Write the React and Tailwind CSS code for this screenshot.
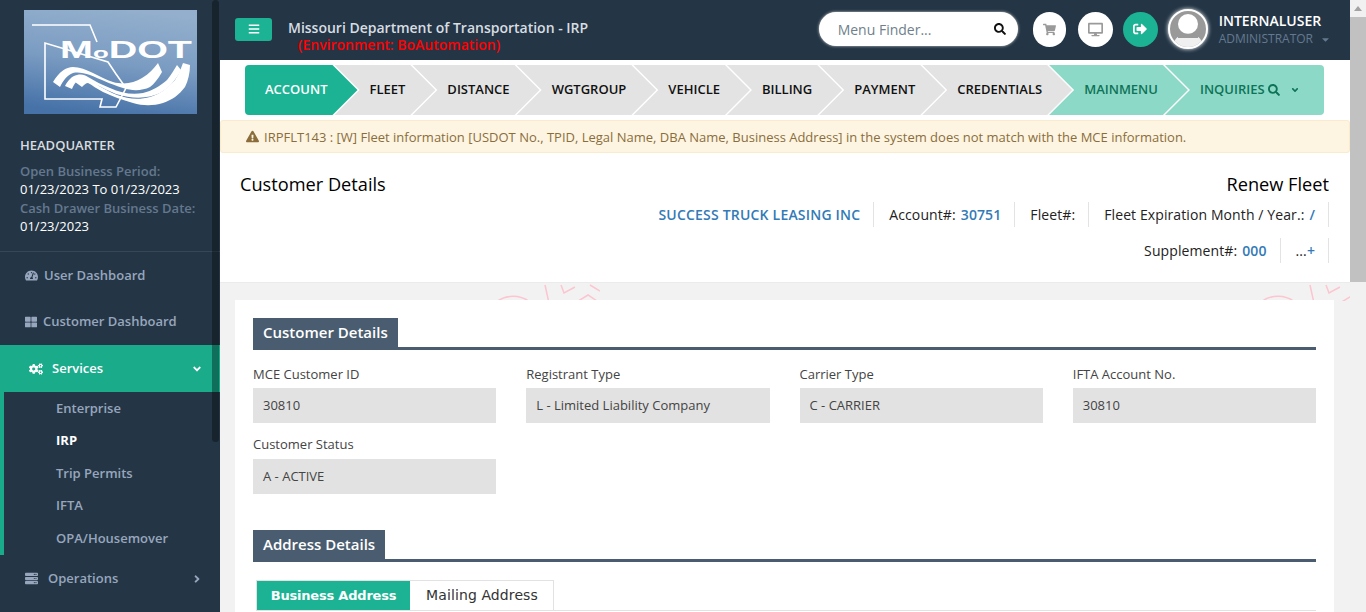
import React from "react";
import {
  FaAngleDown,
  FaAngleRight,
  FaBars,
  FaCaretDown,
  FaCogs,
  FaDesktop,
  FaExclamationTriangle,
  FaSearch,
  FaServer,
  FaShoppingCart,
  FaSignOutAlt,
  FaTachometerAlt,
  FaThLarge,
} from "react-icons/fa";

const steps = ["FLEET", "DISTANCE", "WGTGROUP", "VEHICLE", "BILLING", "PAYMENT", "CREDENTIALS"];
const subMenu = ["Enterprise", "IRP", "Trip Permits", "IFTA", "OPA/Housemover"];

const Logo = () => (
  <svg viewBox="0 0 173 104" className="block w-[173px] h-[104px] shrink-0">
    <defs>
      <linearGradient id="logoBg" x1="0.6" y1="0" x2="0.4" y2="1">
        <stop offset="0" stopColor="#93afcd" />
        <stop offset="0.5" stopColor="#7b9cc2" />
        <stop offset="1" stopColor="#4672a8" />
      </linearGradient>
    </defs>
    <rect width="173" height="104" fill="url(#logoBg)" />
    <path
      d="M8 15 L66 15 L73 32 M84 52 L92 64 L102 78 L92 97 L76 97 L78 89 L21 89 L21 33 Z"
      fill="none"
      stroke="#fff"
      strokeWidth="1.6"
    />
    <text
      x="36"
      y="48"
      fill="#fff"
      fontFamily="Liberation Sans, sans-serif"
      fontSize="23"
      textLength="132"
      lengthAdjust="spacingAndGlyphs"
    >
      M<tspan fontSize="15">o</tspan>DOT
    </text>
    <path d="M29 72 C35 62 42 57 49 57 C62 57 76 68 89 72 C100 75 110 73 118 68 C125 64 130 58 134 53 L138 62 C134 69 130 74 126 77 C118 81 108 81 99 78 C86 74 76 69 66 65 C60 63 54 62 49 63 C43 65 39 71 36 77 Z" fill="#fff" />
    <path d="M41 76 C44 70 48 66 53 65 C58 64 61 65 64 67 C71 71 78 75 86 78 C97 83 108 85 119 83 C128 81 136 76 143 70 C147 65 150 60 153 55 L157 60 C152 70 145 78 136 83 C124 89 108 89 92 84 C80 79 70 73 62 70 C56 68 52 70 48 79 Z" fill="#fff" />
    <path d="M51 72 C54 69 57 68 61 68 C70 72 80 80 93 85 C104 89 115 90 126 87 C136 84 144 78 151 70 C155 64 157 58 159 53 L166 55 C166 63 164 71 161 77 C155 85 148 90 139 93 C129 96 119 96 109 93 C98 90 88 86 79 82 C73 79 68 75 64 73 C62 73 60 75 58 77 Z" fill="#fff" />
  </svg>
);

const Sidebar = () => (
  <aside className="relative w-[220px] shrink-0 h-full bg-[#243646] overflow-hidden font-semibold text-[13px]">
    <div className="absolute right-[1px] top-0 w-[7px] h-[442px] rounded-[4px] bg-black/35" />
    <div className="pt-[10px] pl-[24px]">
      <Logo />
    </div>
    <div className="pl-[20px] pt-[22px] h-[138px] border-b border-[#364757]">
      <div className="text-[#d9dcdf] leading-[18px]">HEADQUARTER</div>
      <div className="mt-[8px] text-[#64788e] leading-[18px]">Open Business Period:</div>
      <div className="text-white font-normal text-[13px] leading-[18px]">01/23/2023 To 01/23/2023</div>
      <div className="mt-[1px] text-[#64788e] leading-[18px]">Cash Drawer Business Date:</div>
      <div className="text-white font-normal text-[13px] leading-[18px]">01/23/2023</div>
    </div>
    <div className="h-[47px] pl-[25px] flex items-center gap-[6px] text-[#98a6bd]">
      <FaTachometerAlt size={13} />
      <span>User Dashboard</span>
    </div>
    <div className="h-[46px] pl-[25px] flex items-center gap-[6px] text-[#98a6bd]">
      <FaThLarge size={12} />
      <span>Customer Dashboard</span>
    </div>
    <div className="h-[47px] pl-[29px] pr-[17px] flex items-center gap-[9px] bg-[#1aab8b] text-white">
      <FaCogs size={14} />
      <span className="flex-1">Services</span>
      <FaAngleDown size={12} />
    </div>
    <div className="h-[163px] border-l-4 border-[#1aab8b] pl-[52px]">
      {subMenu.map((item) => (
        <div
          key={item}
          className={`h-[32.5px] flex items-center ${item === "IRP" ? "text-white font-bold" : "text-[#98a6bd]"}`}
        >
          {item}
        </div>
      ))}
    </div>
    <div className="h-[47px] pl-[25px] pr-[17px] flex items-center gap-[10px] text-[#98a6bd]">
      <FaServer size={13} />
      <span className="flex-1">Operations</span>
      <FaAngleRight size={12} />
    </div>
  </aside>
);

const Header = () => (
  <header className="h-[60px] shrink-0 bg-[#243646] flex items-center pl-[15px] pr-[19px] pb-[2px]">
    <button className="w-[37px] h-[23px] rounded-[3px] bg-[#1cb394] text-white flex items-center justify-center">
      <FaBars size={12} />
    </button>
    <div className="ml-[16px] flex-1 font-semibold text-[14px] leading-[17px] pt-[13px]">
      <div className="text-[#d8dde2]">Missouri Department of Transportation - IRP</div>
      <div className="ml-[10px] text-[#ff0000]">(Environment: BoAutomation)</div>
    </div>
    <div className="w-[199px] h-[34px] rounded-full bg-white shadow-[0_0_3px_#ccc] flex items-center pl-[19px] pr-[12px] text-[14px] text-[#6f7f8c]">
      <span className="flex-1">Menu Finder...</span>
      <FaSearch size={12} className="text-[#111]" />
    </div>
    <div className="ml-[15px] w-[33px] h-[35px] rounded-full bg-white flex items-center justify-center text-[#9a9a9a]">
      <FaShoppingCart size={13} />
    </div>
    <div className="ml-[12px] w-[35px] h-[35px] rounded-full bg-white flex items-center justify-center text-[#9a9a9a]">
      <FaDesktop size={15} />
    </div>
    <div className="ml-[10px] w-[35px] h-[35px] rounded-full bg-[#1cb394] flex items-center justify-center text-white">
      <FaSignOutAlt size={14} />
    </div>
    <div className="ml-[10px] w-[40px] h-[40px] rounded-full border-2 border-white shadow-[0_0_4px_#fff] bg-[#999] overflow-hidden">
      <svg viewBox="0 0 36 36" className="w-full h-full block">
        <circle cx="18" cy="13" r="10" fill="#fff" />
        <path d="M3 36 C4 26 10 24 14 24 L22 24 C26 24 32 26 33 36 Z" fill="#fff" opacity="0.85" />
        <path d="M8 25 C12 22 24 22 28 25 L28 27 L8 27 Z" fill="#999" />
      </svg>
    </div>
    <div className="ml-[11px]">
      <div className="text-white font-semibold text-[14px] leading-[19px]">INTERNALUSER</div>
      <div className="mt-[1px] flex items-center text-[12px] leading-[16px] text-[#64798f]">
        ADMINISTRATOR
        <FaCaretDown size={11} className="ml-[7px]" />
      </div>
    </div>
  </header>
);

const chevron =
  "[clip-path:polygon(0_0,calc(100%-25px)_0,100%_50%,calc(100%-25px)_100%,0_100%,25px_50%)]";

const Stepper = () => (
  <div className="h-[50px] mt-[5px] ml-[25px] mr-[26px] flex rounded-[4px] overflow-hidden font-semibold text-[13px]">
    <div className="h-full pl-[20px] pr-[30px] flex items-center bg-[#1cb394] text-white [clip-path:polygon(0_0,calc(100%-25px)_0,100%_50%,calc(100%-25px)_100%,0_100%)]">
      ACCOUNT
    </div>
    {steps.map((step) => (
      <div key={step} className={`h-full -ml-[23px] pl-[35px] pr-[30px] flex items-center bg-[#e3e3e3] text-[#111] ${chevron}`}>
        {step}
      </div>
    ))}
    <div className={`h-full -ml-[23px] pl-[35px] pr-[30px] flex items-center bg-[#8cd9c7] text-[#0f7357] ${chevron}`}>
      MAINMENU
    </div>
    <div className="h-full flex-1 -ml-[23px] pl-[35px] flex items-center bg-[#8cd9c7] text-[#0f7357] [clip-path:polygon(0_0,100%_0,100%_100%,0_100%,25px_50%)]">
      INQUIRIES
      <FaSearch size={12} className="ml-[3px]" />
      <FaAngleDown size={10} className="ml-[10px]" />
    </div>
  </div>
);

const Alert = () => (
  <div className="mt-[5px] h-[33px] shrink-0 rounded-[3px] border border-[#faebcc] bg-[#fdf5e2] flex items-center pl-[25px] pt-[2px] text-[13px] text-[#8a6d3b]">
    <FaExclamationTriangle size={13} className="mr-[5px] -mt-[2px]" />
    IRPFLT143 : [W] Fleet information [USDOT No., TPID, Legal Name, DBA Name, Business Address] in the system does not match with the MCE information.
  </div>
);

const MetaItem = ({ children, className = "" }) => (
  <div className={`h-[25px] flex items-center border-r border-[#e3e3e3] pl-[15px] pr-[13px] tracking-[0.1px] ${className}`}>{children}</div>
);

const CustomerHeader = () => (
  <section className="h-[129px] shrink-0 bg-white pl-[20px] pr-[21px] pt-[20px] text-[14px] text-[#222]">
    <div className="flex justify-between text-[18.2px] font-medium leading-[22px] text-black">
      <span>Customer Details</span>
      <span>Renew Fleet</span>
    </div>
    <div className="mt-[7px] flex justify-end">
      <MetaItem className="font-semibold text-[#337ab7] tracking-[0.2px]">SUCCESS TRUCK LEASING INC</MetaItem>
      <MetaItem>
        Account#:<span className="ml-[5px] font-semibold text-[#337ab7]">30751</span>
      </MetaItem>
      <MetaItem>Fleet#:</MetaItem>
      <MetaItem>
        Fleet Expiration Month / Year.:<span className="ml-[5px] font-semibold text-[#337ab7]">/</span>
      </MetaItem>
    </div>
    <div className="mt-[11px] flex justify-end">
      <MetaItem>
        Supplement#:<span className="ml-[5px] font-semibold text-[#337ab7]">000</span>
      </MetaItem>
      <MetaItem>
        ...<span className="font-semibold text-[#337ab7]">+</span>
      </MetaItem>
    </div>
  </section>
);

const SectionTitle = ({ children }) => (
  <div className="border-b-[3px] border-[#4a5d70] flex">
    <div className="h-[29px] px-[10px] bg-[#4a5d70] text-white font-semibold text-[15px] flex items-center">{children}</div>
  </div>
);

const Field = ({ label, value, inputGap = "mt-[5px]" }) => (
  <div>
    <div className="h-[18px] text-[13px] leading-[18px] text-[#444]">{label}</div>
    <div className={`${inputGap} h-[35px] bg-[#e2e2e2] px-[10px] pt-[1px] flex items-center text-[13px] text-[#444]`}>{value}</div>
  </div>
);

const Gears = ({ className }) => (
  <svg viewBox="0 0 105 18" className={`absolute top-0 w-[105px] h-[18px] ${className}`} fill="none" stroke="#fcc5cf" strokeWidth="1.5">
    <path d="M0 20 C10 11 26 11 36 20" />
    <path d="M50 2 L54 20" />
    <path d="M66 2 L69 10 L80 4" />
    <path d="M80 20 L93 12 L105 20" />
    <path d="M95 2 L105 8" />
  </svg>
);

export default function App() {
  return (
    <div className="flex h-[612px] w-[1366px] overflow-hidden bg-white font-['Open_Sans',sans-serif]">
      <Sidebar />
      <main className="flex-1 min-w-0 flex flex-col">
        <Header />
        <Stepper />
        <Alert />
        <CustomerHeader />
        <div className="relative flex-1 min-h-0 bg-[#f2f2f2] border-t border-[#ebebeb] pt-[17px] pl-[15px] pr-[16px] overflow-hidden">
          <Gears className="left-[275px]" />
          <Gears className="left-[1040px]" />
          <div className="relative h-[400px] bg-white pt-[18px] px-[18px]">
            <SectionTitle>Customer Details</SectionTitle>
            <div className="mt-[15px] grid grid-cols-4 gap-x-[30px] gap-y-[12px]">
              <Field label="MCE Customer ID" value="30810" />
              <Field label="Registrant Type" value="L - Limited Liability Company" />
              <Field label="Carrier Type" value="C - CARRIER" />
              <Field label="IFTA Account No." value="30810" />
              <Field label="Customer Status" value="A - ACTIVE" inputGap="mt-[6px]" />
            </div>
            <div className="mt-[36px]">
              <SectionTitle>Address Details</SectionTitle>
            </div>
            <div className="mt-[18px] ml-[3px] flex border-b border-[#e2e2e2] font-['DejaVu_Sans',sans-serif]">
              <div className="h-[30px] w-[155px] border-t border-l border-[#e2e2e2]">
                <div className="h-full w-[153px] bg-[#1cb394] text-white font-bold flex items-center justify-center text-[13px] tracking-[-0.2px]">
                  Business Address
                </div>
              </div>
              <div className="h-[30px] w-[143px] border-t border-r border-[#e2e2e2] flex items-center justify-center text-[14px] tracking-[0.1px] text-[#333]">
                Mailing Address
              </div>
            </div>
          </div>
        </div>
      </main>
      <div className="w-[16px] shrink-0 h-full bg-[#f1f1f1] flex flex-col items-center">
        <div className="h-[17px] flex items-center">
          <div className="w-0 h-0 border-x-[4px] border-x-transparent border-b-[5px] border-b-[#a3a3a3]" />
        </div>
        <div className="w-full h-[265px] bg-[#c1c1c1]" />
      </div>
    </div>
  );
}
